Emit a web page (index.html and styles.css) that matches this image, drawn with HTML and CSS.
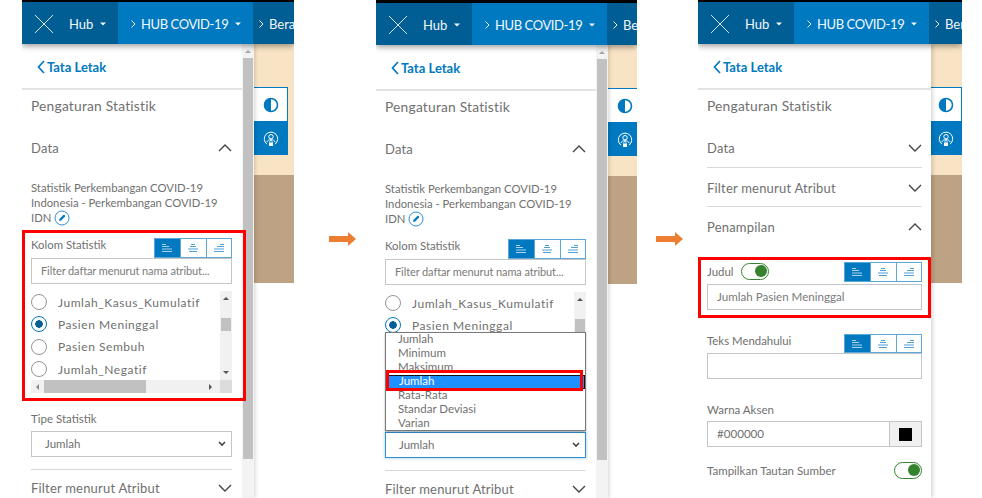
FILE: index.html
```html
<!DOCTYPE html>
<html lang="id">

<head>
    <meta charset="UTF-8">
    <title>Pengaturan Statistik</title>
    <link rel="stylesheet" href="styles.css">
</head>

<body>
    <svg class="defs" width="0" height="0">
        <symbol id="i-logo" viewBox="0 0 18 18"><path d="M0 0L18 18M18 0L0 18" fill="none" stroke="currentColor" stroke-width="1"/></symbol>
        <symbol id="i-caret" viewBox="0 0 6 4"><path d="M0 0.5H6L3 3.5Z" fill="currentColor"/></symbol>
        <symbol id="i-crumb" viewBox="0 0 5 8"><path d="M0.5 0.5L4 4L0.5 7.5" fill="none" stroke="currentColor" stroke-width="1"/></symbol>
        <symbol id="i-back" viewBox="0 0 8 14"><path d="M7 1L1.5 7L7 13" fill="none" stroke="currentColor" stroke-width="1.7"/></symbol>
        <symbol id="i-down" viewBox="0 0 14 8"><path d="M1 1L7 7L13 1" fill="none" stroke="currentColor" stroke-width="1.4"/></symbol>
        <symbol id="i-up" viewBox="0 0 14 8"><path d="M1 7L7 1L13 7" fill="none" stroke="currentColor" stroke-width="1.4"/></symbol>
        <symbol id="i-small-down" viewBox="0 0 8 6"><path d="M1 1L4 4L7 1" fill="none" stroke="currentColor" stroke-width="1.6"/></symbol>
        <symbol id="i-contrast" viewBox="0 0 16 16"><circle cx="8" cy="8" r="6.5" fill="none" stroke="currentColor" stroke-width="1.6"/><path d="M8 1.5A6.5 6.5 0 0 0 8 14.5Z" fill="currentColor"/></symbol>
        <symbol id="i-share" viewBox="0 0 16 16"><path d="M4 13.2A6.7 6.7 0 1 1 12 13.2" fill="none" stroke="currentColor" stroke-width="1"/><circle cx="8" cy="5.7" r="2.2" fill="none" stroke="currentColor" stroke-width="1"/><path d="M3.8 11.2C4.5 9.2 6 8.7 8 8.7S11.5 9.2 12.2 11.2" fill="none" stroke="currentColor" stroke-width="1"/><rect x="6" y="11.5" width="4" height="3.5" fill="currentColor"/><path d="M6.8 11.5V10.6A1.2 1.2 0 0 1 9.2 10.6V11.5" fill="none" stroke="currentColor" stroke-width="0.8"/></symbol>
        <symbol id="i-pencil" viewBox="0 0 16 16"><circle cx="8" cy="8" r="7" fill="#fff" stroke="currentColor" stroke-width="1"/><path d="M5 11L5.6 8.8L9.9 4.6L11.5 6.1L7.2 10.4Z" fill="#0079c1"/></symbol>
        <symbol id="i-left" viewBox="0 0 10 8"><path d="M0 0.5H4M0 2.5H7M0 5H10M0 7.5H10" stroke="currentColor" stroke-width="1"/></symbol>
        <symbol id="i-center" viewBox="0 0 10 8"><path d="M3 0.5H7M2 2.5H8M0 5H10M1 7.5H9" stroke="currentColor" stroke-width="1"/></symbol>
        <symbol id="i-right" viewBox="0 0 10 8"><path d="M6 0.5H10M3 2.5H10M0 5H10M0 7.5H10" stroke="currentColor" stroke-width="1"/></symbol>
    </svg>

    <div class="page">
        <!-- layar 1 -->
        <section class="shot shot-a">
            <header class="topbar">
                <div class="crumb crumb-root">
                    <svg class="logo"><use href="#i-logo"/></svg>
                    <span>Hub</span>
                    <svg class="caret"><use href="#i-caret"/></svg>
                </div>
                <div class="crumb crumb-current">
                    <svg class="sep"><use href="#i-crumb"/></svg>
                    <span>HUB COVID-19</span>
                    <svg class="caret"><use href="#i-caret"/></svg>
                </div>
                <div class="crumb crumb-next">
                    <svg class="sep"><use href="#i-crumb"/></svg>
                    <span>Beranda</span>
                </div>
            </header>
            <div class="workspace">
                <div class="panel">
                    <a class="back"><svg><use href="#i-back"/></svg>Tata Letak</a>
                    <div class="panel-inner">
                        <h2 class="title">Pengaturan Statistik</h2>
                        <div class="acc"><span>Data</span><svg><use href="#i-up"/></svg></div>
                        <p class="desc">Statistik Perkembangan COVID-19 Indonesia - Perkembangan COVID-19 IDN <svg class="pencil"><use href="#i-pencil"/></svg></p>
                        <div class="field-head">
                            <label>Kolom Statistik</label>
                            <div class="aligns">
                                <button class="active"><svg><use href="#i-left"/></svg></button>
                                <button><svg><use href="#i-center"/></svg></button>
                                <button><svg><use href="#i-right"/></svg></button>
                            </div>
                        </div>
                        <input class="text-input" type="text" placeholder="Filter daftar menurut nama atribut...">
                        <div class="list">
                            <ul class="options">
                                <li><i class="radio"></i>Jumlah_Kasus_Kumulatif</li>
                                <li><i class="radio checked"></i>Pasien Meninggal</li>
                                <li><i class="radio"></i>Pasien Sembuh</li>
                                <li><i class="radio"></i>Jumlah_Negatif</li>
                            </ul>
                            <div class="vbar"><b class="up"></b><b class="thumb"></b><b class="down"></b></div>
                            <div class="hbar"><b class="lt"></b><b class="thumb"></b><b class="rt"></b></div>
                            <div class="corner"></div>
                        </div>
                        <label class="label-line label-tipe">Tipe Statistik</label>
                        <div class="select"><span>Jumlah</span><svg><use href="#i-small-down"/></svg></div>
                        <div class="acc ruled"><span>Filter menurut Atribut</span><svg><use href="#i-down"/></svg></div>
                    </div>
                </div>
                <div class="scroll"><b class="up"></b><b class="thumb"></b></div>
                <div class="stage">
                    <div class="cream">
                        <div class="tools">
                            <div class="tool"><svg><use href="#i-contrast"/></svg></div>
                            <div class="tool tool-on"><svg><use href="#i-share"/></svg></div>
                        </div>
                    </div>
                    <div class="tan"></div>
                </div>
            </div>
            <div class="redbox redbox-a"></div>
        </section>

        <svg class="arrow" viewBox="0 0 27 14"><path d="M0 4H19V0L27 7L19 14V10H0Z" fill="#ed7d31"/></svg>

        <!-- layar 2 -->
        <section class="shot shot-b">
            <header class="topbar">
                <div class="crumb crumb-root">
                    <svg class="logo"><use href="#i-logo"/></svg>
                    <span>Hub</span>
                    <svg class="caret"><use href="#i-caret"/></svg>
                </div>
                <div class="crumb crumb-current">
                    <svg class="sep"><use href="#i-crumb"/></svg>
                    <span>HUB COVID-19</span>
                    <svg class="caret"><use href="#i-caret"/></svg>
                </div>
                <div class="crumb crumb-next">
                    <svg class="sep"><use href="#i-crumb"/></svg>
                    <span>Beranda</span>
                </div>
            </header>
            <div class="workspace">
                <div class="panel">
                    <a class="back"><svg><use href="#i-back"/></svg>Tata Letak</a>
                    <div class="panel-inner">
                        <h2 class="title">Pengaturan Statistik</h2>
                        <div class="acc"><span>Data</span><svg><use href="#i-up"/></svg></div>
                        <p class="desc">Statistik Perkembangan COVID-19 Indonesia - Perkembangan COVID-19 IDN <svg class="pencil"><use href="#i-pencil"/></svg></p>
                        <div class="field-head">
                            <label>Kolom Statistik</label>
                            <div class="aligns">
                                <button class="active"><svg><use href="#i-left"/></svg></button>
                                <button><svg><use href="#i-center"/></svg></button>
                                <button><svg><use href="#i-right"/></svg></button>
                            </div>
                        </div>
                        <input class="text-input" type="text" placeholder="Filter daftar menurut nama atribut...">
                        <div class="list">
                            <ul class="options">
                                <li><i class="radio"></i>Jumlah_Kasus_Kumulatif</li>
                                <li><i class="radio checked"></i>Pasien Meninggal</li>
                                <li><i class="radio"></i>Pasien Sembuh</li>
                                <li><i class="radio"></i>Jumlah_Negatif</li>
                            </ul>
                            <div class="vbar"><b class="up"></b><b class="thumb"></b><b class="down"></b></div>
                            <div class="hbar"><b class="lt"></b><b class="thumb"></b><b class="rt"></b></div>
                            <div class="corner"></div>
                        </div>
                        <label class="label-line label-tipe">Tipe Statistik</label>
                        <div class="select select-focus"><span>Jumlah</span><svg><use href="#i-small-down"/></svg></div>
                        <div class="acc ruled"><span>Filter menurut Atribut</span><svg><use href="#i-down"/></svg></div>
                    </div>
                </div>
                <div class="scroll"><b class="up"></b><b class="thumb"></b></div>
                <div class="stage">
                    <div class="cream">
                        <div class="tools">
                            <div class="tool"><svg><use href="#i-contrast"/></svg></div>
                            <div class="tool tool-on"><svg><use href="#i-share"/></svg></div>
                        </div>
                    </div>
                    <div class="tan"></div>
                </div>
            </div>
            <ul class="dropdown">
                <li>Jumlah</li>
                <li>Minimum</li>
                <li>Maksimum</li>
                <li class="picked">Jumlah</li>
                <li>Rata-Rata</li>
                <li>Standar Deviasi</li>
                <li>Varian</li>
            </ul>
            <div class="redbox redbox-b"></div>
        </section>

        <svg class="arrow" viewBox="0 0 27 14"><path d="M0 4H19V0L27 7L19 14V10H0Z" fill="#ed7d31"/></svg>

        <!-- layar 3 -->
        <section class="shot shot-c">
            <header class="topbar">
                <div class="crumb crumb-root">
                    <svg class="logo"><use href="#i-logo"/></svg>
                    <span>Hub</span>
                    <svg class="caret"><use href="#i-caret"/></svg>
                </div>
                <div class="crumb crumb-current">
                    <svg class="sep"><use href="#i-crumb"/></svg>
                    <span>HUB COVID-19</span>
                    <svg class="caret"><use href="#i-caret"/></svg>
                </div>
                <div class="crumb crumb-next">
                    <svg class="sep"><use href="#i-crumb"/></svg>
                    <span>Beranda</span>
                </div>
            </header>
            <div class="workspace">
                <div class="panel panel-wide">
                    <a class="back"><svg><use href="#i-back"/></svg>Tata Letak</a>
                    <div class="panel-inner">
                        <h2 class="title">Pengaturan Statistik</h2>
                        <div class="acc lined"><span>Data</span><svg><use href="#i-down"/></svg></div>
                        <div class="acc lined"><span>Filter menurut Atribut</span><svg><use href="#i-down"/></svg></div>
                        <div class="acc acc-tall"><span>Penampilan</span><svg><use href="#i-up"/></svg></div>
                        <div class="field-head head-judul">
                            <div class="head-left">
                                <label>Judul</label>
                                <span class="toggle"></span>
                            </div>
                            <div class="aligns">
                                <button class="active"><svg><use href="#i-left"/></svg></button>
                                <button><svg><use href="#i-center"/></svg></button>
                                <button><svg><use href="#i-right"/></svg></button>
                            </div>
                        </div>
                        <input class="text-input input-judul" type="text" value="Jumlah Pasien Meninggal">
                        <div class="field-head head-teks">
                            <label>Teks Mendahului</label>
                            <div class="aligns">
                                <button class="active"><svg><use href="#i-left"/></svg></button>
                                <button><svg><use href="#i-center"/></svg></button>
                                <button><svg><use href="#i-right"/></svg></button>
                            </div>
                        </div>
                        <input class="text-input" type="text">
                        <label class="label-line label-warna">Warna Aksen</label>
                        <div class="color">
                            <span class="color-value">#000000</span>
                            <span class="color-btn"><i></i></span>
                        </div>
                        <div class="source">
                            <label>Tampilkan Tautan Sumber</label>
                            <span class="toggle"></span>
                        </div>
                    </div>
                </div>
                <div class="stage">
                    <div class="cream">
                        <div class="tools tools-wide">
                            <div class="tool"><svg><use href="#i-contrast"/></svg></div>
                            <div class="tool tool-on"><svg><use href="#i-share"/></svg></div>
                        </div>
                    </div>
                    <div class="tan"></div>
                </div>
            </div>
            <div class="redbox redbox-c"></div>
        </section>
    </div>
</body>

</html>
```

FILE: styles.css
```css
* {
    margin: 0;
    padding: 0;
    box-sizing: border-box;
    list-style: none;
    font-style: normal;
}

body {
    background: #fff;
    font-family: "Lato", "Open Sans", sans-serif;
    color: #707070;
    overflow: hidden;
}

.defs {
    position: absolute;
}

.page {
    display: flex;
    align-items: flex-start;
    width: 982px;
    height: 498px;
    padding-left: 22px;
}

.shot {
    position: relative;
    flex: none;
    height: 498px;
    overflow: hidden;
    border-top: 2px solid #000;
    background: #fff;
}

.shot-a {
    width: 272px;
}

.shot-b {
    width: 261px;
    border-top-width: 3px;
}

.shot-c {
    width: 264px;
}

.arrow {
    flex: none;
    width: 27px;
    height: 14px;
    margin-top: 232px;
}

.shot-a + .arrow {
    margin-left: 35px;
    margin-right: 20px;
}

.shot-b + .arrow {
    margin-left: 19px;
    margin-right: 15px;
}

/* header */
.topbar {
    position: relative;
    z-index: 3;
    display: flex;
    height: 42px;
    background: #005e95;
    color: #f2f7fb;
    font-size: 13px;
    box-shadow: 0 2px 6px rgba(0, 0, 0, 0.4);
}

.crumb {
    display: flex;
    align-items: center;
    flex: none;
    padding-top: 2px;
    white-space: nowrap;
}

.crumb-root {
    width: 96px;
    padding-left: 13px;
}

.crumb-current {
    width: 135px;
    padding-left: 13px;
    background: #0079c1;
    letter-spacing: -0.4px;
}

.crumb-next {
    padding-left: 6px;
}

.logo {
    width: 18px;
    height: 18px;
    margin-right: 16px;
    color: #d5e6f2;
}

.caret {
    width: 6px;
    height: 4px;
    margin-left: 7px;
}

.sep {
    width: 5px;
    height: 8px;
    margin-right: 5px;
}

/* isi */
.workspace {
    display: flex;
    height: 454px;
}

.panel {
    flex: none;
    width: 220px;
    background: #fff;
}

.panel-wide {
    width: 233px;
    box-shadow: 2px 0 4px rgba(0, 0, 0, 0.15);
    position: relative;
    z-index: 1;
}

.back {
    display: flex;
    align-items: center;
    height: 46px;
    padding: 2px 0 0 15px;
    border-bottom: 2px solid #e3e3e3;
    color: #0079c1;
    font-size: 13px;
    font-weight: 700;
}

.back svg {
    width: 8px;
    height: 14px;
    margin-right: 2px;
}

.panel-inner {
    padding: 0 10px 0 9px;
}

.panel-wide .panel-inner {
    padding-right: 9px;
}

.title {
    height: 39px;
    padding-top: 6px;
    font-size: 13.8px;
    font-weight: 400;
    line-height: 20px;
    letter-spacing: 0.2px;
}

.acc {
    display: flex;
    align-items: center;
    justify-content: space-between;
    height: 39px;
    padding-bottom: 1px;
    font-size: 13px;
    letter-spacing: 0.2px;
}

.acc svg {
    width: 14px;
    height: 8px;
    color: #444;
}

.acc.lined {
    padding-bottom: 0;
    border-bottom: 1px solid #d9d9d9;
}

.acc.lined + .acc.lined {
    padding-top: 1px;
}

.acc.ruled {
    margin-top: 12px;
    padding-bottom: 2px;
    border-top: 1px solid #d9d9d9;
}

.acc-tall {
    height: 41px;
}

.desc {
    margin-top: 12px;
    font-size: 11.3px;
    line-height: 15px;
}

.pencil {
    width: 16px;
    height: 16px;
    vertical-align: -4px;
    color: #2f8fd0;
}

.field-head {
    display: flex;
    align-items: flex-start;
    justify-content: space-between;
    height: 20px;
    margin-top: 12px;
    font-size: 11.4px;
    line-height: 14px;
}

.aligns {
    display: flex;
    height: 20px;
    border: 1px solid #5aa7d8;
}

.aligns button {
    display: flex;
    align-items: center;
    justify-content: center;
    width: 25.5px;
    background: #fff;
    border: 0;
    border-left: 1px solid #5aa7d8;
    color: #4d9fd6;
}

.aligns button:first-child {
    border-left: 0;
}

.aligns .active {
    background: #0079c1;
    color: #a9d3ee;
}

.aligns svg {
    width: 10px;
    height: 8px;
}

.text-input {
    display: block;
    width: 100%;
    height: 26px;
    padding: 0 9px 2px;
    border: 1px solid #c5c5c5;
    background: #fff;
    font-family: inherit;
    font-size: 11.6px;
    color: #7a7a7a;
    outline: 0;
}

.text-input::placeholder {
    color: #7a7a7a;
    opacity: 1;
    font-size: 11px;
    letter-spacing: -0.1px;
}

/* daftar kolom */
.list {
    display: grid;
    grid-template-columns: 189px 12px;
    grid-template-rows: 89px 13px;
    margin-top: 7px;
}

.options {
    overflow: hidden;
}

.options li {
    display: flex;
    align-items: center;
    height: 22.3px;
    font-size: 12px;
    letter-spacing: 0.55px;
    white-space: nowrap;
}

.radio {
    flex: none;
    width: 16px;
    height: 16px;
    margin-right: 11px;
    border: 1px solid #959595;
    border-radius: 50%;
    background: #fff;
}

.radio.checked {
    border-color: #0079c1;
    background: radial-gradient(circle, #005e95 0 3.5px, #fff 4px);
}

.vbar,
.hbar,
.corner {
    background: #f1f1f1;
}

.vbar {
    display: flex;
    flex-direction: column;
    align-items: center;
    padding-top: 6px;
}

.vbar .thumb {
    width: 10px;
    height: 13px;
    margin-top: 18px;
    background: #c1c1c1;
}

.vbar .down {
    margin-top: 40px;
}

.up,
.down,
.lt,
.rt {
    flex: none;
    width: 0;
    height: 0;
    border: 3px solid transparent;
}

.up {
    border-top: 0;
    border-bottom: 3px solid #555;
}

.down {
    border-bottom: 0;
    border-top: 3px solid #555;
}

.hbar {
    display: flex;
    align-items: center;
    padding-left: 5px;
}

.lt {
    border-left: 0;
    border-right: 3px solid #888;
}

.rt {
    border-right: 0;
    border-left: 3px solid #555;
    margin-left: 63px;
}

.hbar .thumb {
    width: 102px;
    height: 100%;
    margin-left: 5px;
    background: #c1c1c1;
}

.corner {
    background: #dcdcdc;
}

.label-line {
    display: block;
    height: 18px;
    font-size: 11.5px;
    line-height: 17px;
}

.label-tipe {
    margin-top: 17px;
}

.select {
    display: flex;
    align-items: center;
    justify-content: space-between;
    height: 26px;
    margin-top: 3px;
    padding: 0 5px 2px 13px;
    border: 1px solid #c5c5c5;
    font-size: 11.5px;
}

.select svg {
    width: 8px;
    height: 6px;
    margin-top: 2px;
    color: #444;
}

.select-focus {
    border-color: #2f8fd0;
    box-shadow: 0 0 3px rgba(47, 143, 208, 0.5);
}

/* scrollbar panel */
.scroll {
    flex: none;
    display: flex;
    flex-direction: column;
    align-items: center;
    width: 12px;
    padding-top: 6px;
    background: #f3f3f3;
    box-shadow: 2px 0 3px rgba(0, 0, 0, 0.12);
    position: relative;
    z-index: 1;
}

.scroll .up {
    border-bottom-color: #a8a8a8;
}

.scroll .thumb {
    width: 10px;
    height: 401px;
    margin-top: 5px;
    background: #c1c1c1;
}

/* latar peta */
.stage {
    flex: 1;
    min-width: 0;
}

.cream {
    height: 131px;
    padding-top: 43px;
    background: #f8e4c5;
}

.tan {
    height: 108px;
    background: #bda283;
}

.tools {
    width: 34px;
}

.tools-wide {
    width: 100%;
}

.tool {
    display: flex;
    align-items: center;
    justify-content: center;
    height: 34px;
    border-top: 1px solid #0079c1;
    border-right: 1px solid #0079c1;
    background: #fff;
    color: #0079c1;
}

.tool-on {
    background: #0079c1;
    color: #fff;
}

.tool svg {
    width: 16px;
    height: 16px;
}

/* menu select */
.dropdown {
    position: absolute;
    top: 329px;
    left: 9px;
    z-index: 4;
    width: 201px;
    height: 99px;
    border: 1px solid #7a7a7a;
    background: #fff;
    box-shadow: 0 1px 2px rgba(0, 0, 0, 0.3);
    font-size: 11.5px;
}

.dropdown li {
    height: 14px;
    padding-left: 12px;
    line-height: 11px;
}

.dropdown .picked {
    margin: 0 0 0 2px;
    padding-left: 10px;
    border: 1px solid #111;
    background: #1e90ff;
    color: #fff;
    line-height: 9px;
}

.redbox {
    position: absolute;
    z-index: 5;
    border: 3px solid #f00;
    pointer-events: none;
}

.redbox-a {
    top: 228px;
    left: 0;
    width: 224px;
    height: 171px;
}

.redbox-b {
    top: 367px;
    left: 10px;
    width: 197px;
    height: 21px;
}

.redbox-c {
    top: 255px;
    left: 0;
    width: 233px;
    height: 61px;
}

/* layar 3 */
.head-judul {
    margin-top: 14px;
}

.head-left {
    display: flex;
    align-items: center;
    gap: 8px;
    margin-top: 1px;
}

.input-judul {
    margin-top: 2px;
}

.head-teks {
    height: 19px;
    margin-top: 24px;
}

.head-teks .aligns {
    height: 19px;
}

.toggle {
    position: relative;
    display: block;
    width: 28px;
    height: 17px;
    border: 1.5px solid #35832f;
    border-radius: 9px;
    background: #fff;
}

.toggle::after {
    content: "";
    position: absolute;
    top: 1px;
    right: 1px;
    width: 12px;
    height: 12px;
    border-radius: 50%;
    background: #35832f;
}

.label-warna {
    margin-top: 22px;
}

.color {
    display: flex;
    height: 26px;
    margin-top: 2px;
    border: 1px solid #c5c5c5;
    font-size: 11.6px;
}

.color-value {
    flex: 1;
    padding-left: 9px;
    line-height: 24px;
}

.color-btn {
    display: flex;
    align-items: center;
    justify-content: center;
    width: 32px;
    border-left: 1px solid #c5c5c5;
    background: #f0f0f0;
}

.color-btn i {
    width: 13px;
    height: 13px;
    background: #000;
}

.source {
    display: flex;
    align-items: center;
    justify-content: space-between;
    height: 20px;
    margin-top: 13px;
    font-size: 11.5px;
}
```
